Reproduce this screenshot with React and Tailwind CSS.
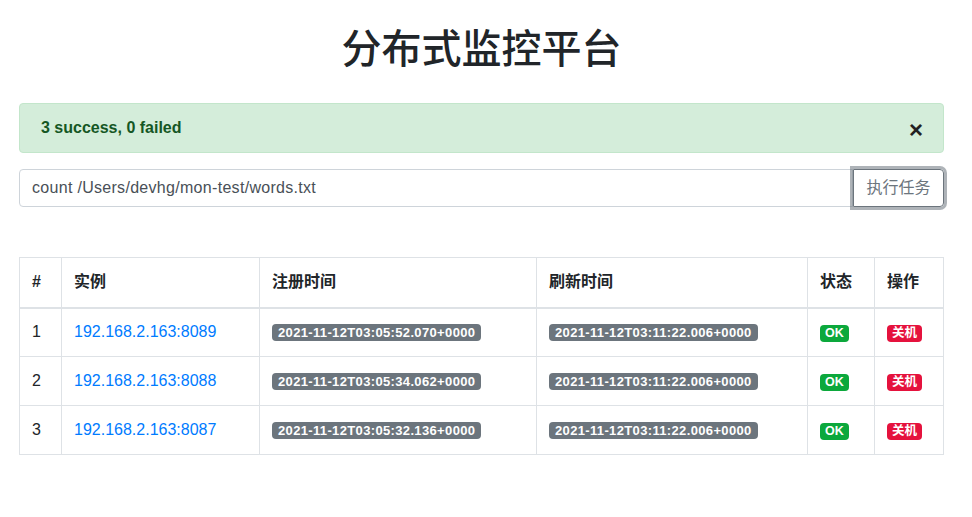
import React from "react";

const rows = [
  { n: 1, inst: "192.168.2.163:8089", reg: "2021-11-12T03:05:52.070+0000", ref: "2021-11-12T03:11:22.006+0000" },
  { n: 2, inst: "192.168.2.163:8088", reg: "2021-11-12T03:05:34.062+0000", ref: "2021-11-12T03:11:22.006+0000" },
  { n: 3, inst: "192.168.2.163:8087", reg: "2021-11-12T03:05:32.136+0000", ref: "2021-11-12T03:11:22.006+0000" },
];

const font = { fontFamily: '"Liberation Sans", "Noto Sans CJK SC", sans-serif' };

export default function App() {
  return (
    <div className="min-h-[517px] bg-white text-[#212529]" style={font}>
      <div className="ml-[19px] w-[925px] pt-[25px]">
        <h1 className="text-center text-[40px] leading-[48px] font-medium text-[#212529]">分布式监控平台</h1>

        <div className="mt-[30px] flex h-[50px] items-center justify-between rounded-[4px] border border-[#c3e6cb] bg-[#d4edda] pl-[21px] pr-[20px] text-[#155724]">
          <span className="text-[16px] font-bold">3 success, 0 failed</span>
          <span className="text-[#222] text-[24px] font-bold leading-none mt-[3px]">×</span>
        </div>

        <div className="mt-[16px] flex h-[38px]">
          <div className="flex flex-1 items-center rounded-l-[4px] border border-[#ced4da] px-[12px] text-[16px] tracking-[0.3px] text-[#495057]">
            count /Users/devhg/mon-test/words.txt
          </div>
          <button className="relative flex w-[91px] items-center justify-center rounded-r-[4px] border border-[#6c757d] text-[16px] text-[#6c757d] shadow-[0_0_0_3px_rgba(108,117,125,0.55)]">
            执行任务
          </button>
        </div>

        <table className="mt-[50px] w-full border-collapse text-[16px]">
          <thead>
            <tr className="h-[50px]">
              <th className="w-[42px] border border-b-2 border-[#dee2e6] px-[12px] text-left font-bold">#</th>
              <th className="w-[198px] border border-b-2 border-[#dee2e6] px-[12px] text-left font-bold">实例</th>
              <th className="w-[277px] border border-b-2 border-[#dee2e6] px-[12px] text-left font-bold">注册时间</th>
              <th className="w-[271px] border border-b-2 border-[#dee2e6] px-[12px] text-left font-bold">刷新时间</th>
              <th className="w-[67px] border border-b-2 border-[#dee2e6] px-[12px] text-left font-bold">状态</th>
              <th className="border border-b-2 border-[#dee2e6] px-[12px] text-left font-bold">操作</th>
            </tr>
          </thead>
          <tbody>
            {rows.map((r) => (
              <tr key={r.n} className="h-[49px]">
                <td className="border border-[#dee2e6] px-[12px]">{r.n}</td>
                <td className="border border-[#dee2e6] px-[12px] text-[#007bff]">{r.inst}</td>
                <td className="border border-[#dee2e6] px-[12px]">
                  <span className="inline-block rounded-[4px] bg-[#6c757d] px-[6px] text-[13px] tracking-[0.35px] font-bold leading-[17px] text-white">{r.reg}</span>
                </td>
                <td className="border border-[#dee2e6] px-[12px]">
                  <span className="inline-block rounded-[4px] bg-[#6c757d] px-[6px] text-[13px] tracking-[0.35px] font-bold leading-[17px] text-white">{r.ref}</span>
                </td>
                <td className="border border-[#dee2e6] px-[12px]">
                  <span className="inline-block rounded-[4px] bg-[#0ca83c] px-[5px] text-[12.5px] font-bold leading-[17px] text-white">OK</span>
                </td>
                <td className="border border-[#dee2e6] px-[12px]">
                  <span className="inline-block rounded-[4px] bg-[#e5123d] px-[5px] text-[12.5px] font-bold leading-[17px] text-white">关机</span>
                </td>
              </tr>
            ))}
          </tbody>
        </table>
      </div>
    </div>
  );
}
